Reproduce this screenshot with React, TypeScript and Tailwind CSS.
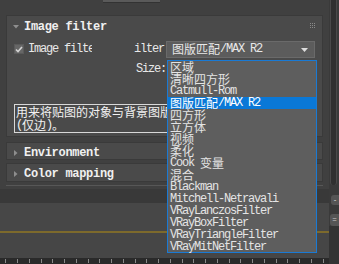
import React from 'react';

const items = [
    '区域',
    '清晰四方形',
    'Catmull-Rom',
    '图版匹配/MAX R2',
    '四方形',
    '立方体',
    '视频',
    '柔化',
    'Cook 变量',
    '混合',
    'Blackman',
    'Mitchell-Netravali',
    'VRayLanczosFilter',
    'VRayBoxFilter',
    'VRayTriangleFilter',
    'VRayMitNetFilter',
];

// ascii in a narrow mono, CJK in 12px like the old bitmap font
function Mixed({ text }: { text: string }) {
    const parts = text.split(/([\x00-\x7f]+)/).filter(Boolean);
    return (
        <>
            {parts.map((p, i) =>
                /^[\x00-\x7f]+$/.test(p) ? (
                    <span key={i} className="font-['Liberation_Mono',monospace] text-[12px] leading-[12px] tracking-[-1.2px] whitespace-pre">{p}</span>
                ) : (
                    <span key={i} className="font-['Noto_Sans_CJK_SC',sans-serif] text-[12px] leading-[12px]">{p}</span>
                )
            )}
        </>
    );
}

function Arrow({ open }: { open?: boolean }) {
    return open ? (
        <svg width="6" height="4" viewBox="0 0 6 4" className="block"><path d="M0 0H6L3 3.5Z" fill="#8e8e8e" /></svg>
    ) : (
        <svg width="4" height="6" viewBox="0 0 4 6" className="block"><path d="M0 0V6L3.5 3Z" fill="#8e8e8e" /></svg>
    );
}

function RolloutHeader({ title, open }: { title: string; open?: boolean }) {
    return (
        <div className="flex items-center h-full pl-[6px] pt-[3px]">
            <span className={`w-[11px] flex ${open ? '' : 'pl-[1px]'}`}><Arrow open={open} /></span>
            <span className="font-['Liberation_Mono',monospace] font-bold text-[12px] leading-[12px] tracking-[-0.3px] text-[#f0f0f0]">{title}</span>
        </div>
    );
}

export default function App() {
    return (
        <div className="relative w-[339px] h-[264px] overflow-hidden bg-[#404040] flex">
            {/* main column */}
            <div className="w-[329px] flex flex-col">
                <div className="h-[15px] relative">
                    <div className="ml-[103px] w-[57px] h-[3px] bg-[#5a5a5a] border-b border-[#333]" />
                </div>

                {/* Image filter rollout */}
                <div className="mx-[6px] h-[123px] bg-[#4a4a4a] border border-[#3a3a3a] flex flex-col">
                    <div className="h-[19px] relative">
                        <RolloutHeader title="Image filter" open />
                        <div className="absolute right-[7px] top-[7px] grid grid-cols-3 gap-[1px]">
                            {Array.from({ length: 9 }).map((_, i) => (
                                <div key={i} className="w-[1px] h-[1px] bg-[#8a8a8a]" />
                            ))}
                        </div>
                    </div>
                    <div className="mt-[6px] h-[17px] flex items-center">
                        <div className="ml-[7px] w-[10px] h-[10px] bg-[#666] border border-[#5a5a5a] flex items-center justify-center">
                            <svg width="8" height="7" viewBox="0 0 8 7"><path d="M1 3.5L3 5.5L7 1" stroke="#d4d4d4" strokeWidth="1.6" fill="none" /></svg>
                        </div>
                        <div className="ml-[4px] w-[64px] overflow-hidden whitespace-nowrap text-[#e8e8e8] flex items-center"><Mixed text="Image filter" /></div>
                        <div className="ml-[42px] w-[30px] text-[#e8e8e8] flex items-center"><Mixed text="ilter" /></div>
                        <div className="ml-[2px] w-[149px] h-[17px] bg-[#5c5c5c] border border-[#6a6a6a] flex items-center pl-[5px] text-[#e8e8e8] relative">
                            <Mixed text="图版匹配/MAX R2" />
                            <svg width="7" height="5" viewBox="0 0 7 5" className="absolute right-[6px] top-[6px]"><path d="M0 0H7L3.5 4Z" fill="#ddd" /></svg>
                        </div>
                    </div>
                    <div className="mt-[4px] h-[15px] flex items-center">
                        <div className="ml-[129px] text-[#e8e8e8] flex items-center"><Mixed text="Size:" /></div>
                    </div>
                    <div className="mt-[27px] ml-[7px] w-[200px] h-[29px] border border-[#d8d8d8] text-[#f2f2f2] pl-[1px] pt-[1px]">
                        <div className="whitespace-nowrap h-[13px] flex items-center"><Mixed text="用来将贴图的对象与背景图版" /></div>
                        <div className="whitespace-nowrap h-[13px] flex items-center"><Mixed text="(仅边)。" /></div>
                    </div>
                </div>

                <div className="mt-[5px] mx-[6px] h-[18px] bg-[#4a4a4a] border border-[#3a3a3a]">
                    <RolloutHeader title="Environment" />
                </div>
                <div className="mt-[3px] mx-[6px] h-[19px] bg-[#4a4a4a] border border-[#3a3a3a]">
                    <RolloutHeader title="Color mapping" />
                </div>
                <div className="mt-[3px] mx-[6px] h-[1px] bg-[#575757]" />

                <div className="mt-[3px] h-[14px] bg-[#393939]" />
                <div className="h-[30px] bg-[#474747] border-b-2 border-[#7d6a2c]" />
                <div className="h-[25px] bg-[#464646]" />
                <div className="h-[6px] bg-[#2a2a2a] flex">
                    {Array.from({ length: 28 }).map((_, i) => (
                        <div key={i} className="w-[12px] flex justify-center pt-[1px]">
                            <div className="w-[1px] h-[4px] bg-[#8a8a8a]" />
                        </div>
                    ))}
                </div>
            </div>

            {/* right scrollbar column */}
            <div className="w-[10px] flex flex-col bg-[#3a3a3a]">
                <div className="ml-[1px] w-[7px] h-[185px] bg-[#303030] rounded-b-[3px] border-x border-[#4a4a4a]" />
                <div className="mt-[10px] h-[10px] bg-[#555] rounded-l-[3px] ml-[2px] flex items-center justify-center text-[8px] leading-none text-[#ccc]">-</div>
                <div className="mt-[9px] h-[12px] bg-[#555] rounded-l-[3px] ml-[1px] flex items-center justify-center text-[8px] leading-none text-[#ccc]">=</div>
                <div className="flex-1 bg-[#333]" />
            </div>

            {/* open dropdown list */}
            <div className="absolute left-[167px] top-[60px] w-[150px] h-[193px] bg-[#5e5e5e] border border-[#1a7ad4]">
                {items.map((it, i) => (
                    <div
                        key={i}
                        className={`h-[12px] leading-[12px] pl-[2px] flex items-center whitespace-nowrap overflow-hidden ${i === 3 ? 'bg-[#0a78d7] text-white' : 'text-[#e4e4e4]'}`}
                    >
                        <Mixed text={it} />
                    </div>
                ))}
            </div>
        </div>
    );
}
